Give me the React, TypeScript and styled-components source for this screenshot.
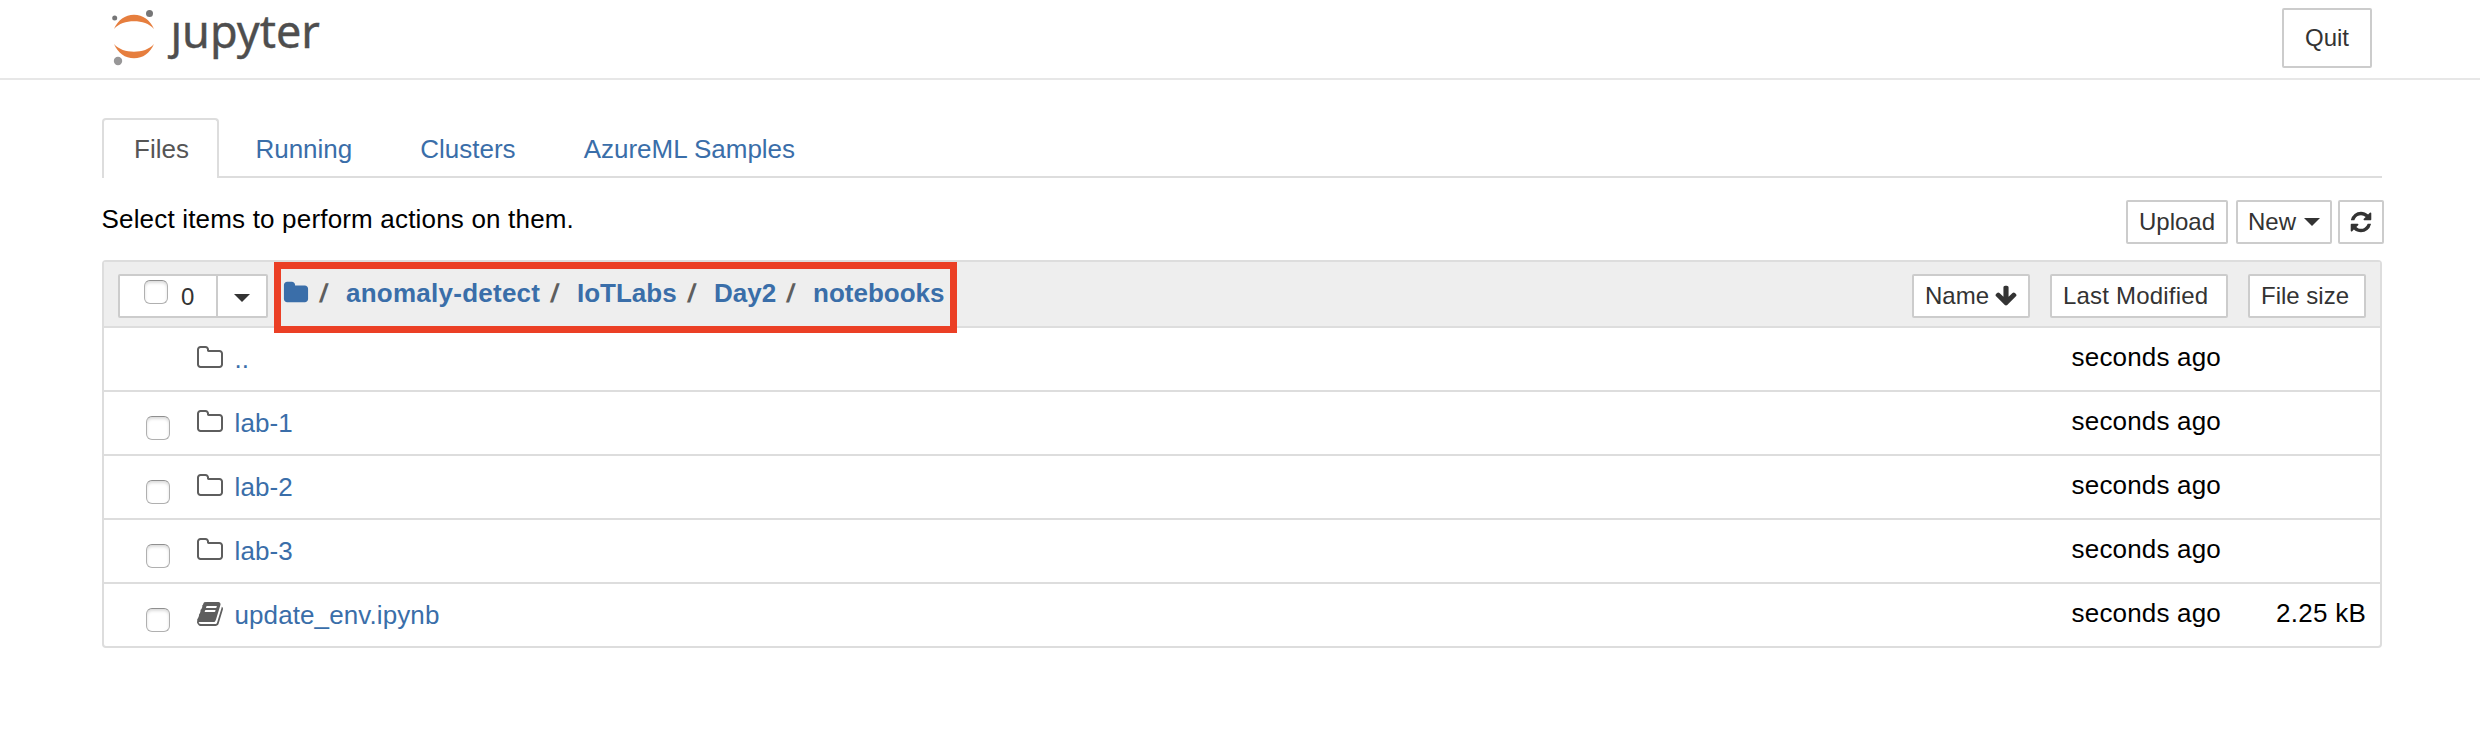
import React from "react";
import styled, { createGlobalStyle } from "styled-components";

const GlobalStyle = createGlobalStyle`
  * { box-sizing: border-box; }
  html, body { margin: 0; padding: 0; background: #fff; }
  body {
    font-family: "Liberation Sans", Arial, Helvetica, sans-serif;
    font-size: 26px;
    line-height: 36px;
    color: #000;
    overflow: hidden;
  }
  a { color: #3a6ea9; text-decoration: none; }
`;

const Page = styled.div`
  width: 2480px;
  height: 730px;
`;

const Header = styled.header`
  height: 80px;
  padding: 8px 108px 0 110px;
  border-bottom: 2px solid #e7e7e7;
  display: flex;
  justify-content: space-between;
  align-items: flex-start;
`;

const Logo = styled.a`
  display: flex;
  height: 60px;
`;

const LogoMark = styled.svg`
  display: block;
  width: 50px;
  height: 60px;
`;

const Wordmark = styled.span`
  font-family: "Noto Sans", "Open Sans", sans-serif;
  font-size: 45px;
  line-height: 60px;
  letter-spacing: 0;
  color: #4e4e4e;
  -webkit-text-stroke: 0.4px #4e4e4e;
  margin: -7px 0 0 10.5px;
`;

const Button = styled.button<{ $w: number; $tall?: boolean; $pad?: number; $ls?: number }>`
  display: flex;
  align-items: center;
  width: ${(p) => p.$w}px;
  height: ${(p) => (p.$tall ? 60 : 44)}px;
  padding: 0 0 0 ${(p) => p.$pad ?? 11}px;
  border: 2px solid #ccc;
  border-radius: 2px;
  background: #fff;
  color: #333;
  font: 24px/36px "Liberation Sans", Arial, sans-serif;
  letter-spacing: ${(p) => p.$ls ?? 0}px;
  white-space: nowrap;
`;

const Main = styled.main`
  padding: 38px 98px 0 102px;
`;

const Tabs = styled.nav`
  display: flex;
  height: 60px;
  border-bottom: 2px solid #ddd;
`;

const Tab = styled.a<{ $active?: boolean }>`
  height: 60px;
  padding: 11px ${(p) => (p.$active ? 28 : 30)}px 0 30px;
  margin-right: ${(p) => (p.$active ? 4.5 : 4)}px;
  border: 2px solid ${(p) => (p.$active ? "#ddd" : "transparent")};
  border-bottom: 0;
  border-radius: 4px 4px 0 0;
  background: ${(p) => (p.$active ? "#fff" : "transparent")};
  && { color: ${(p) => (p.$active ? "#555" : "#3a6ea9")}; }
`;

const Toolbar = styled.div`
  display: flex;
  justify-content: space-between;
  height: 82px;
  padding-top: 22px;
  margin-right: -2px;
`;

const Hint = styled.span`
  margin: 1px 0 0 -0.5px;
  letter-spacing: 0.18px;
`;

const Actions = styled.div`
  display: flex;
`;

const Spacer = styled.span<{ $w: number }>`
  flex: none;
  width: ${(p) => p.$w}px;
`;

const Caret = styled.span`
  width: 0;
  height: 0;
  border: 8px solid transparent;
  border-top-color: #333;
  border-bottom: 0;
`;

const List = styled.section`
  border: 2px solid #ddd;
  border-radius: 4px;
`;

const ListHeader = styled.div`
  position: relative;
  display: flex;
  height: 66px;
  padding: 12px 14px 0;
  background: #eee;
  border-bottom: 2px solid #ddd;
`;

const SelectGroup = styled.div`
  display: flex;
  width: 150px;
  height: 44px;
  border: 2px solid #ccc;
  border-radius: 2px;
  background: #fff;
  font-size: 24px;
  color: #333;
`;

const SelectAll = styled.label`
  display: flex;
  width: 98px;
  padding: 4px 0 0 24px;
  border-right: 2px solid #ccc;
`;

const Count = styled.span`
  margin: -1px 0 0 13px;
`;

const DropToggle = styled.span`
  display: flex;
  padding: 18px 0 0 16px;
`;

const Checkbox = styled.span<{ $hidden?: boolean }>`
  flex: none;
  width: 24px;
  height: 24px;
  border: 1px solid #b0b0b0;
  border-top-color: #8f8f8f;
  border-radius: 6px;
  background: #fff;
  box-shadow: inset 0 2px 3px rgba(0, 0, 0, 0.14);
  visibility: ${(p) => (p.$hidden ? "hidden" : "visible")};
`;

const Crumbs = styled.div`
  display: flex;
  margin: 1px 0 0 15px;
  font-weight: bold;
`;

const CrumbIcon = styled.a`
  width: 34px;
  padding-top: 4.5px;
`;

const Crumb = styled.a<{ $w: number; $ls?: number }>`
  width: ${(p) => p.$w}px;
  letter-spacing: ${(p) => p.$ls ?? 0}px;
  white-space: nowrap;
`;

const Slash = styled.span`
  width: 29px;
  padding-left: 2px;
  color: #5e5e5e;
  transform: skewX(-9deg);
`;

const Highlight = styled.div`
  position: absolute;
  left: 170px;
  top: 0;
  width: 683px;
  height: 71px;
  border: 7px solid #eb3f25;
`;

const SortButtons = styled.div`
  display: flex;
  gap: 20px;
  margin-left: auto;
`;

const Row = styled.div`
  display: flex;
  height: 64px;
  border-bottom: 2px solid #ddd;
  padding: 0 14px 0 42px;
  &:last-child { border-bottom: 0; height: 62px; }
  ${Checkbox} { margin-top: 24px; }
`;

const Glyph = styled.svg<{ $size: number }>`
  flex: none;
  display: block;
  width: ${(p) => p.$size}px;
  height: ${(p) => p.$size}px;
  fill: currentColor;
`;

const RowIcon = styled.span`
  color: #5e5e5e;
  margin: 16px 10.5px 0 26px;
`;

const Name = styled.a`
  margin-top: 13px;
  letter-spacing: 0.1px;
`;

const Modified = styled.span`
  margin: 11px 0 0 auto;
  letter-spacing: 0.18px;
`;

const Size = styled.span`
  width: 145px;
  margin-top: 11px;
  text-align: right;
  letter-spacing: 0.25px;
`;

const paths = {
  folder:
    "M1728 608v704q0 92-66 158t-158 66h-1216q-92 0-158-66t-66-158v-960q0-92 66-158t158-66h320q92 0 158 66t66 158v32h672q92 0 158 66t66 158z",
  folderOpen:
    "M1600 1312v-704q0-40-28-68t-68-28h-704q-40 0-68-28t-28-68v-64q0-40-28-68t-68-28h-320q-40 0-68 28t-28 68v960q0 40 28 68t68 28h1216q40 0 68-28t28-68zm128-704v704q0 92-66 158t-158 66h-1216q-92 0-158-66t-66-158v-960q0-92 66-158t158-66h320q92 0 158 66t66 158v32h672q92 0 158 66t66 158z",
  arrowDown:
    "M1675 832q0 53-37 90l-651 652q-39 37-91 37-53 0-90-37l-651-652q-38-36-38-90 0-53 38-91l74-75q39-37 91-37 53 0 90 37l294 294v-704q0-52 38-90t90-38h128q52 0 90 38t38 90v704l294-294q37-37 90-37 52 0 91 37l75 75q37 39 37 91z",
  refresh:
    "M1639 1056q0 5-1 7-64 268-268 434.5t-478 166.5q-146 0-282.5-55t-243.5-157l-129 129q-19 19-45 19t-45-19-19-45v-448q0-26 19-45t45-19h448q26 0 45 19t19 45-19 45l-137 137q71 66 161 102t187 36q134 0 250-65t186-179q11-17 53-117 8-23 30-23h192q13 0 22.5 9.5t9.5 22.5zm25-800v448q0 26-19 45t-45 19h-448q-26 0-45-19t-19-45 19-45l138-138q-148-137-349-137-134 0-250 65t-186 179q-11 17-53 117-8 23-30 23h-199q-13 0-22.5-9.5t-9.5-22.5v-7q65-268 270-434.5t480-166.5q146 0 284 55.5t245 156.5l130-129q19-19 45-19t45 19 19 45z",
  book: "M1703 478q40 57 18 129l-275 906q-19 64-76.5 107.5t-122.5 43.5h-923q-77 0-148.5-53.5t-99.5-131.5q-24-67-2-127 0-4 3-27t4-37q1-8-3-21.5t-3-19.5q2-11 8-21t16.5-23.5 16.5-23.5q23-38 45-91.5t30-91.5q3-10 .5-30t-.5-28q3-11 17-28t17-23q21-36 42-92t25-90q1-9-2.5-32t.5-28q4-13 22-30.5t22-22.5q19-26 42.5-84.5t27.5-96.5q1-8-3-25.5t-2-26.5q2-8 9-18t18-23 17-21q8-12 16.5-30.5t15-35 16-36 19.5-32 26.5-23.5 36-11.5 47.5 5.5l-1 3q38-9 51-9h761q74 0 114 56t18 130l-274 906q-36 119-71.5 153.5t-128.5 34.5h-869q-27 0-38 15-11 16-1 43 24 70 144 70h923q29 0 56-15.5t35-41.5l300-987q7-22 5-57 38 15 59 43zm-1064 2q-4 13 2 22.5t20 9.5h608q13 0 25.5-9.5t16.5-22.5l21-64q4-13-2-22.5t-20-9.5h-608q-13 0-25.5 9.5t-16.5 22.5zm-83 256q-4 13 2 22.5t20 9.5h608q13 0 25.5-9.5t16.5-22.5l21-64q4-13-2-22.5t-20-9.5h-608q-13 0-25.5 9.5t-16.5 22.5z",
};

function Icon({ name, size }: { name: keyof typeof paths; size: number }) {
  return (
    <Glyph $size={size} viewBox="0 0 1792 1792" aria-hidden>
      <path d={paths[name]} />
    </Glyph>
  );
}

type Entry = { name: string; icon: "folderOpen" | "book"; size?: string; parent?: boolean };

const entries: Entry[] = [
  { name: "..", icon: "folderOpen", parent: true },
  { name: "lab-1", icon: "folderOpen" },
  { name: "lab-2", icon: "folderOpen" },
  { name: "lab-3", icon: "folderOpen" },
  { name: "update_env.ipynb", icon: "book", size: "2.25 kB" },
];

export default function App() {
  return (
    <Page>
      <GlobalStyle />
      <Header>
        <Logo>
          <LogoMark viewBox="110 8 50 60">
            <path d="M114 29C118 20 125 14.700 134 14.700S150 20 154 29C149 23.500 142 21.300 134 21.300S119 23.500 114 29Z" fill="#e67e3e" />
            <path d="M114 44C118 53 125 58.300 134 58.300S150 53 154 44C149 49.500 142 51.700 134 51.700S119 49.500 114 44Z" fill="#e67e3e" />
            <circle cx="149.500" cy="13.500" r="3.500" fill="#767677" />
            <circle cx="114.700" cy="18" r="2.500" fill="#767677" />
            <circle cx="118" cy="61" r="4.200" fill="#989798" />
          </LogoMark>
          <Wordmark>ȷupyter</Wordmark>
        </Logo>
        <Button $w={90} $tall $pad={21}>Quit</Button>
      </Header>
      <Main>
        <Tabs>
          <Tab $active>Files</Tab>
          <Tab>Running</Tab>
          <Tab>Clusters</Tab>
          <Tab>AzureML Samples</Tab>
        </Tabs>
        <Toolbar>
          <Hint>Select items to perform actions on them.</Hint>
          <Actions>
            <Button $w={102}>Upload</Button>
            <Spacer $w={8} />
            <Button $w={96} $pad={10}>
              New
              <Spacer $w={8} />
              <Caret />
            </Button>
            <Spacer $w={6} />
            <Button $w={46} $pad={9}>
              <Icon name="refresh" size={24} />
            </Button>
          </Actions>
        </Toolbar>
        <List>
          <ListHeader>
            <SelectGroup>
              <SelectAll>
                <Checkbox />
                <Count>0</Count>
              </SelectAll>
              <DropToggle>
                <Caret />
              </DropToggle>
            </SelectGroup>
            <Crumbs>
              <CrumbIcon>
                <Icon name="folder" size={26} />
              </CrumbIcon>
              <Slash>/</Slash>
              <Crumb $w={202} $ls={0.25}>anomaly-detect</Crumb>
              <Slash>/</Slash>
              <Crumb $w={108}>IoTLabs</Crumb>
              <Slash>/</Slash>
              <Crumb $w={70}>Day2</Crumb>
              <Slash>/</Slash>
              <Crumb $w={132}>notebooks</Crumb>
            </Crumbs>
            <SortButtons>
              <Button $w={118}>
                Name
                <Spacer $w={5} />
                <Icon name="arrowDown" size={24} />
              </Button>
              <Button $w={178} $ls={0.2}>Last Modified</Button>
              <Button $w={118}>File size</Button>
            </SortButtons>
            <Highlight />
          </ListHeader>
          {entries.map((e) => (
            <Row key={e.name}>
              <Checkbox $hidden={e.parent} />
              <RowIcon>
                <Icon name={e.icon} size={28} />
              </RowIcon>
              <Name>{e.name}</Name>
              <Modified>seconds ago</Modified>
              <Size>{e.size}</Size>
            </Row>
          ))}
        </List>
      </Main>
    </Page>
  );
}
